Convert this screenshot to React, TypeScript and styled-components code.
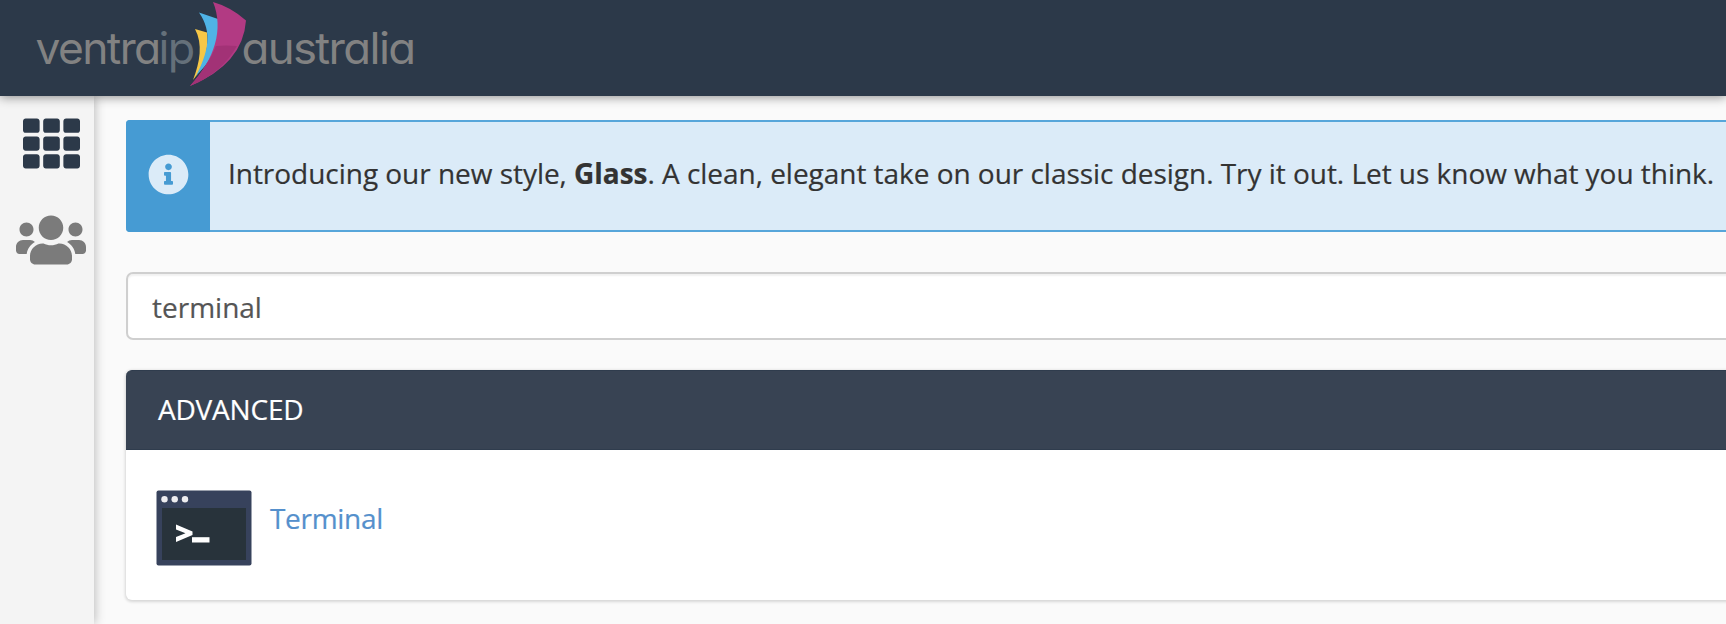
import React from "react";
import styled, { createGlobalStyle } from "styled-components";
import { FaInfoCircle, FaTh, FaUsers } from "react-icons/fa";

const GlobalStyle = createGlobalStyle`
  *, *::before, *::after { box-sizing: border-box; }
  html, body { margin: 0; padding: 0; }
  body {
    overflow: hidden;
    background: #fafafa;
    color: #333;
    font-family: "Open Sans", "Noto Sans", sans-serif;
    font-size: 28px;
    -webkit-text-stroke: 0.2px currentColor;
  }
`;

const Page = styled.div`
  display: flex;
  flex-direction: column;
  width: 100%;
  height: 100vh;
  min-height: 624px;
  overflow: hidden;
`;

const Header = styled.header`
  position: relative;
  z-index: 2;
  flex: 0 0 96px;
  background: #2c3949;
  box-shadow: 0 1px 10px rgba(0, 0, 0, 0.45);
`;

const Logo = styled.svg`
  display: block;
  width: 440px;
  height: 96px;
`;

const Wordmark = styled.g`
  fill: #828282;
  font-family: Inter, Lato, sans-serif;
  font-size: 44px;
  font-weight: 400;
  font-feature-settings: "cv11" 1;
  letter-spacing: -1.6px;
  -webkit-text-stroke: 0;
`;

const Body = styled.div`
  display: flex;
  flex: 1;
  min-height: 0;
`;

const Sidebar = styled.nav`
  position: relative;
  z-index: 1;
  display: flex;
  flex-direction: column;
  align-items: center;
  gap: 33px;
  flex: 0 0 94px;
  padding: 19px 0 0 8px;
  background: #f4f4f4;
  box-shadow: 1px 0 10px rgba(0, 0, 0, 0.26);
`;

const NavLink = styled.a<{ $active?: boolean; $size: number }>`
  display: flex;
  color: ${(p) => (p.$active ? "#2c3949" : "#7b7b7b")};

  svg {
    width: ${(p) => p.$size}px;
    height: auto;
  }
`;

const Main = styled.main`
  flex: 1;
  min-width: 0;
  margin-right: -20px;
  padding: 24px 0 0 32px;
`;

const Alert = styled.div`
  display: flex;
  height: 112px;
  border: 2px solid #57a6da;
  border-left-width: 0;
  border-radius: 4px;
  background: #dbebf8;
  white-space: nowrap;
`;

const AlertIcon = styled.div`
  display: flex;
  align-items: center;
  justify-content: center;
  flex: 0 0 84px;
  margin: -2px 0;
  padding-bottom: 4px;
  border-radius: 4px 0 0 4px;
  background: #469bd3;
  color: #dbebf8;

  svg {
    width: 41px;
    height: 41px;
  }
`;

const AlertText = styled.p`
  margin: 0;
  padding-left: 18px;
  letter-spacing: -0.033px;
  line-height: 103px;
`;

const Search = styled.input`
  display: block;
  width: 100%;
  height: 68px;
  margin: 40px 0 30px;
  padding: 2px 24px 0 24px;
  border: 2px solid #cfcfcf;
  border-radius: 7px;
  outline: 0;
  background: #fff;
  box-shadow: inset 0 2px 2px rgba(0, 0, 0, 0.06);
  color: #555;
  font: inherit;
`;

const Panel = styled.section`
  height: 230px;
  border-radius: 6px;
  background: #fff;
  box-shadow: 0 1px 3px 1px rgba(0, 0, 0, 0.14);
`;

const PanelTitle = styled.h2`
  height: 80px;
  margin: 0;
  padding-left: 32px;
  border: solid #2f3c4d;
  border-width: 1px 0;
  border-radius: 6px 6px 0 0;
  background: #384353;
  color: #fff;
  font-size: 28px;
  font-weight: 400;
  letter-spacing: -0.2px;
  line-height: 77px;
`;

const AppLink = styled.a`
  display: flex;
  gap: 18px;
  padding: 40px 0 0 30px;
  color: #5590cc;
  letter-spacing: -0.3px;
  line-height: 56px;
`;

const TerminalArt = styled.svg`
  display: block;
  width: 96px;
  height: 76px;
`;

function BrandLogo() {
  return (
    <Logo viewBox="0 0 440 96" role="img" aria-label="ventraip australia">
      <Wordmark>
        <text x="35.5" y="63.5" textLength="124" lengthAdjust="spacingAndGlyphs">ventra</text>
        <text x="158.5" y="63.5" textLength="35" lengthAdjust="spacingAndGlyphs" fill="#65707a">ip</text>
        <text x="241.5" y="63.5" textLength="173" lengthAdjust="spacingAndGlyphs">australia</text>
      </Wordmark>
      <path d="M195 29 L207 32.5 C209 50 204 67 193 80 C200 62 203 44 195 29Z" fill="#f6c747" />
      <path d="M199 12.5 L218 19 C221 42 213 59 196 76 C208 53 213 32 199 12.5Z" fill="#4fb3e6" />
      <path d="M213 2 Q231 7 246 20.5 Q243 64 190 86 C215 59 224 29 213 2Z" fill="#b23a83" />
      <path d="M216 46 Q225 45 237 46 C227 63 213 77 190 86 Q208 66 216 46Z" fill="#a23276" />
    </Logo>
  );
}

function TerminalIcon() {
  return (
    <TerminalArt viewBox="0 0 96 76" aria-hidden="true">
      <rect x="0.5" y="0.5" width="95" height="75" rx="2" fill="#37425c" />
      <rect x="6" y="18" width="84" height="52" fill="#28333b" />
      <circle cx="8.5" cy="9.3" r="3.2" fill="#eeedf0" />
      <circle cx="18.7" cy="9.3" r="3.2" fill="#eeedf0" />
      <circle cx="29" cy="9.3" r="3.2" fill="#eeedf0" />
      <path d="M20 34.5 L36.5 41.5 V45 L20 52 V47 L29.5 43.2 L20 39.5Z" fill="#fff" />
      <rect x="36" y="47.2" width="17.5" height="5.3" fill="#fff" />
    </TerminalArt>
  );
}

export default function App() {
  return (
    <>
      <GlobalStyle />
      <Page>
        <Header>
          <BrandLogo />
        </Header>
        <Body>
          <Sidebar>
            <NavLink $active $size={57} aria-label="Tools">
              <FaTh />
            </NavLink>
            <NavLink $size={70} aria-label="User manager">
              <FaUsers />
            </NavLink>
          </Sidebar>
          <Main>
            <Alert>
              <AlertIcon>
                <FaInfoCircle />
              </AlertIcon>
              <AlertText>
                Introducing our new style, <b>Glass</b>. A clean, elegant take on our classic design. Try it out. Let us know what you think.
              </AlertText>
            </Alert>
            <Search defaultValue="terminal" aria-label="Search" />
            <Panel>
              <PanelTitle>ADVANCED</PanelTitle>
              <AppLink>
                <TerminalIcon />
                <span>Terminal</span>
              </AppLink>
            </Panel>
          </Main>
        </Body>
      </Page>
    </>
  );
}
